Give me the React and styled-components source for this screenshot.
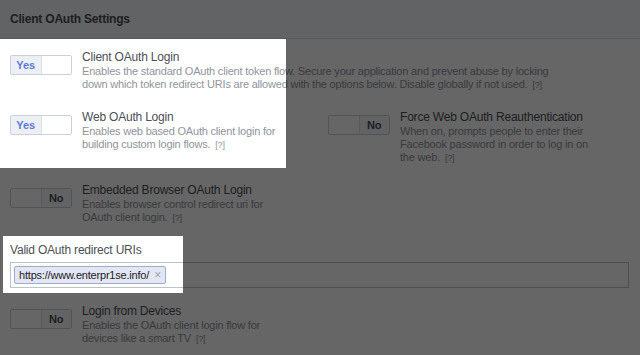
import React from 'react';
import styled, { createGlobalStyle } from 'styled-components';

const GlobalStyle = createGlobalStyle`
    body {
        margin: 0;
        background: #fff;
        font-family: "Liberation Sans", Arial, Helvetica, sans-serif;
        letter-spacing: -0.2px;
    }
`

const settings = {
    client: {
        title: 'Client OAuth Login',
        desc: 'Enables the standard OAuth client token flow. Secure your application and prevent abuse by locking down which token redirect URIs are allowed with the options below. Disable globally if not used.',
        on: true,
        wide: true,
    },
    web: {
        title: 'Web OAuth Login',
        desc: 'Enables web based OAuth client login for building custom login flows.',
        on: true,
    },
    force: {
        title: 'Force Web OAuth Reauthentication',
        desc: 'When on, prompts people to enter their Facebook password in order to log in on the web.',
        on: false,
    },
    embedded: {
        title: 'Embedded Browser OAuth Login',
        desc: 'Enables browser control redirect uri for OAuth client login.',
        on: false,
    },
    devices: {
        title: 'Login from Devices',
        desc: 'Enables the OAuth client login flow for devices like a smart TV',
        on: false,
    },
};

function Toggle({ on }) {
    return (
        <Switch>
            {on ? (
                <>
                    <SwitchLabel $on>Yes</SwitchLabel>
                    <Knob />
                </>
            ) : (
                <>
                    <Knob />
                    <SwitchLabel>No</SwitchLabel>
                </>
            )}
        </Switch>
    );
}

function Setting({ item }) {
    return (
        <Row>
            <Toggle on={item.on} />
            <Text $wide={item.wide}>
                <Title>{item.title}</Title>
                <Desc>
                    {item.desc}
                    <Help>[?]</Help>
                </Desc>
            </Text>
        </Row>
    );
}

export default function App() {
    return (
        <>
            <GlobalStyle />
            <Panel>
                <Header>Client OAuth Settings</Header>
                <Body>
                    <Setting item={settings.client} />
                    <TwoCol>
                        <Setting item={settings.web} />
                        <Setting item={settings.force} />
                    </TwoCol>
                    <Setting item={settings.embedded} />
                    <Field>
                        <FieldLabel>Valid OAuth redirect URIs</FieldLabel>
                        <TokenInput>
                            <Token>
                                https://www.enterpr1se.info/
                                <Remove>×</Remove>
                            </Token>
                        </TokenInput>
                    </Field>
                    <Setting item={settings.devices} />
                </Body>
            </Panel>
            {/* tour overlay with two spotlight holes */}
            <Dim />
        </>
    );
}

const Panel = styled.div`
    background: #fff;
    min-height: 100vh;
`

const Header = styled.div`
    height: 38px;
    display: flex;
    align-items: center;
    padding: 0 10px;
    background: #f6f7f9;
    border-bottom: 1px solid #dddfe2;
    color: #4b4f56;
    font-size: 12px;
    font-weight: bold;
`

const Body = styled.div`
    padding: 11px 11px 0 10px;
    display: flex;
    flex-direction: column;
    gap: 18px;
`

const TwoCol = styled.div`
    display: grid;
    grid-template-columns: 318px 1fr;
`

const Row = styled.div`
    display: flex;
    align-items: flex-start;
    gap: 10px;
`

const Switch = styled.div`
    flex: none;
    margin-top: 5px;
    width: 62px;
    height: 20px;
    box-sizing: border-box;
    border: 1px solid #ccd0d5;
    border-radius: 2px;
    display: flex;
    overflow: hidden;
    letter-spacing: 0;
`

const SwitchLabel = styled.div`
    flex: 1;
    display: flex;
    align-items: center;
    justify-content: center;
    background: ${p => (p.$on ? '#eceff5' : '#f6f7f9')};
    color: ${p => (p.$on ? '#5b7bd5' : '#4b4f56')};
    font-size: 11px;
    font-weight: bold;
`

const Knob = styled.div`
    flex: 1;
    background: #fff;
    border-left: 1px solid #dddfe2;
    &:first-child {
        border-left: none;
        border-right: 1px solid #dddfe2;
    }
`

const Text = styled.div`
    width: ${p => (p.$wide ? '488px' : '203px')};
`

const Title = styled.div`
    font-size: 12px;
    line-height: 15px;
    color: #4b4f56;
`

const Desc = styled.div`
    font-size: 11px;
    line-height: 13px;
    color: #90949c;
`

const Help = styled.span`
    font-size: 9px;
    margin-left: 5px;
`

const Field = styled.div`
    display: flex;
    flex-direction: column;
    gap: 5px;
    margin-bottom: -2px;
`

const FieldLabel = styled.div`
    font-size: 12px;
    line-height: 14px;
    color: #4b4f56;
`

const TokenInput = styled.div`
    height: 26px;
    box-sizing: border-box;
    border: 1px solid #bec3c9;
    padding: 0 3px;
    display: flex;
    align-items: center;
`

const Token = styled.div`
    height: 18px;
    box-sizing: border-box;
    display: flex;
    align-items: center;
    padding: 0 4px;
    background: #e2e7f2;
    border: 1px solid #9dacd0;
    border-radius: 2px;
    color: #1d2129;
    font-size: 11px;
`

const Remove = styled.span`
    margin-left: 5px;
    color: #a0a4ac;
    font-size: 12px;
`

const Dim = styled.div`
    position: fixed;
    inset: 0;
    background: rgba(0, 0, 0, 0.6);
    clip-path: path(evenodd, 'M0 0 H4000 V4000 H0 Z M0 39 H286 V168 H0 Z M3 236 H183 V293 H3 Z');
`
